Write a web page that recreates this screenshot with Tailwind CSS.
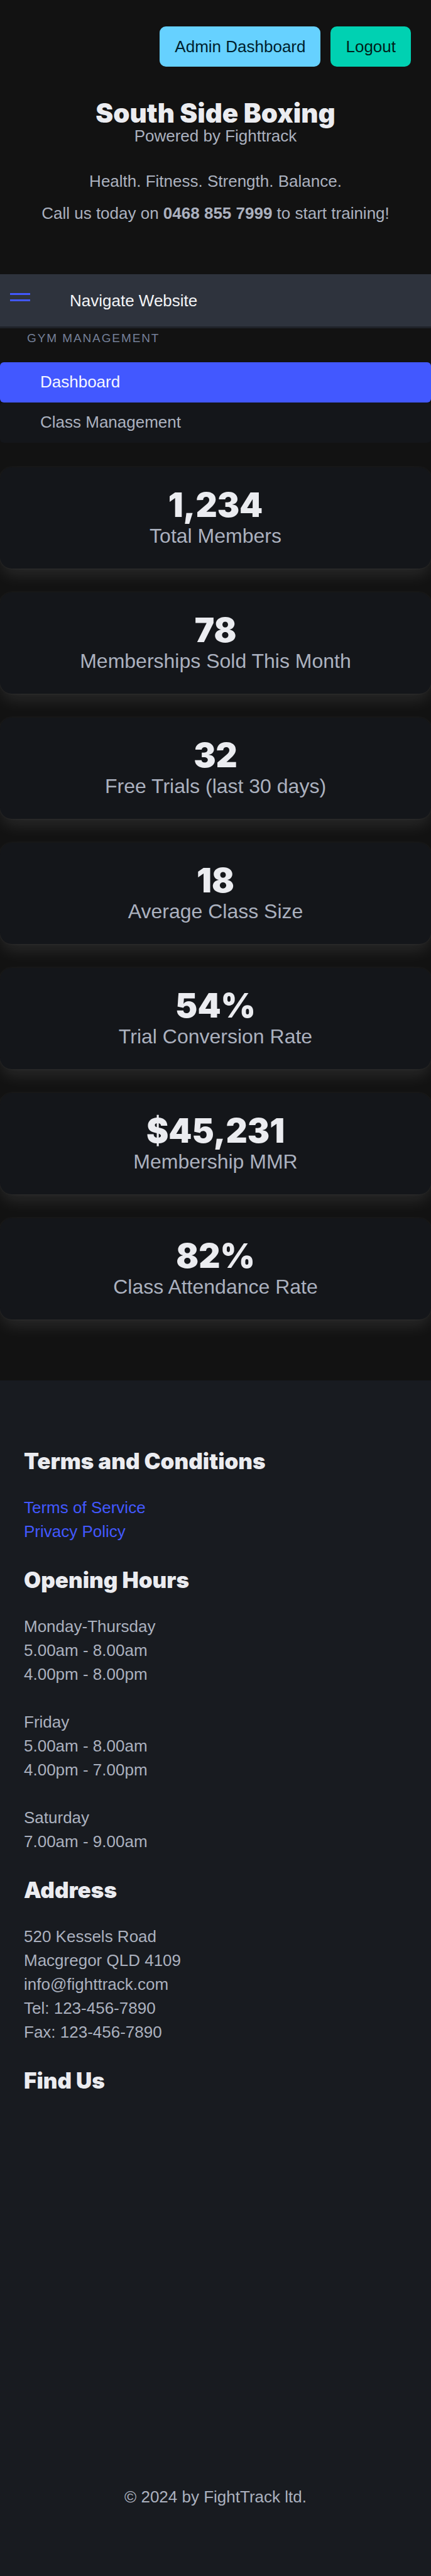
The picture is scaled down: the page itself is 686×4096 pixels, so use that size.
<!DOCTYPE html>
<html lang="en">
<head>
<meta charset="utf-8">
<meta name="viewport" content="width=device-width, initial-scale=1">
<title>South Side Boxing</title>
<script src="https://cdn.jsdelivr.net/npm/@tailwindcss/browser@4"></script>
</head>
<body class="min-h-screen bg-[#121212] font-['Liberation_Sans',Arial,sans-serif] text-[26px] leading-[38px] text-[#abb1bf]">
<header class="px-8 pt-[42px] pb-[78px] text-center">
  <div class="flex justify-end gap-4">
    <button type="button" class="h-16 rounded-[10px] bg-[#66d1ff] px-6 text-[#001f2e]">Admin Dashboard</button>
    <button type="button" class="h-16 rounded-[10px] bg-[#00d1b2] px-6 text-[#001f1a]">Logout</button>
  </div>
  <h1 class="mt-[53px] font-['Inter',sans-serif] text-[42px] leading-[42px] font-black text-[#ebecf0]">South Side Boxing</h1>
  <p class="leading-[30px]">Powered by Fighttrack</p>
  <p class="mt-[38px]">Health. Fitness. Strength. Balance.</p>
  <p class="mt-[13px]">Call us today on <strong>0468 855 7999</strong> to start training!</p>
</header>

<nav class="flex h-[86px] items-center border-b-[3px] border-[#1f2229] bg-[#2e333d] pl-4 text-[#f3f4f6]">
  <button type="button" aria-label="Open menu" class="mr-[63px]">
    <svg class="block h-[23px] w-8" viewBox="0 0 32 23" fill="#4258ff" aria-hidden="true"><rect width="32" height="3"/><rect y="10" width="32" height="3"/></svg>
  </button>
  <span>Navigate Website</span>
</nav>

<aside>
  <p class="mb-6 px-[43px] pt-px text-[19px] leading-[29px] tracking-widest uppercase text-[#758099]">Gym Management</p>
  <ul>
    <li><a href="#dashboard" aria-current="page" class="block rounded-md bg-[#4258ff] px-16 pt-3 pb-[14px] text-[#f5f6ff]">Dashboard</a></li>
    <li><a href="#classes" class="block rounded-md bg-[#14161a] px-16 pt-3 pb-[14px]">Class Management</a></li>
  </ul>
</aside>

<main class="flex flex-col gap-[38px] pt-[39px] pb-[97px] text-center text-[32px] leading-10">
  <section class="rounded-[19px] bg-[#14161a] p-8 shadow-[0_13px_26px_-3px_rgba(255,255,255,0.1),0_0_0_2px_rgba(255,255,255,0.02)]">
    <h2 class="font-['Inter',sans-serif] text-[53px] leading-[57px] font-black text-[#ebecf0]">1,234</h2>
    <p>Total Members</p>
  </section>
  <section class="rounded-[19px] bg-[#14161a] p-8 shadow-[0_13px_26px_-3px_rgba(255,255,255,0.1),0_0_0_2px_rgba(255,255,255,0.02)]">
    <h2 class="font-['Inter',sans-serif] text-[53px] leading-[57px] font-black text-[#ebecf0]">78</h2>
    <p>Memberships Sold This Month</p>
  </section>
  <section class="rounded-[19px] bg-[#14161a] p-8 shadow-[0_13px_26px_-3px_rgba(255,255,255,0.1),0_0_0_2px_rgba(255,255,255,0.02)]">
    <h2 class="font-['Inter',sans-serif] text-[53px] leading-[57px] font-black text-[#ebecf0]">32</h2>
    <p>Free Trials (last 30 days)</p>
  </section>
  <section class="rounded-[19px] bg-[#14161a] p-8 shadow-[0_13px_26px_-3px_rgba(255,255,255,0.1),0_0_0_2px_rgba(255,255,255,0.02)]">
    <h2 class="font-['Inter',sans-serif] text-[53px] leading-[57px] font-black text-[#ebecf0]">18</h2>
    <p>Average Class Size</p>
  </section>
  <section class="rounded-[19px] bg-[#14161a] p-8 shadow-[0_13px_26px_-3px_rgba(255,255,255,0.1),0_0_0_2px_rgba(255,255,255,0.02)]">
    <h2 class="font-['Inter',sans-serif] text-[53px] leading-[57px] font-black text-[#ebecf0]">54%</h2>
    <p>Trial Conversion Rate</p>
  </section>
  <section class="rounded-[19px] bg-[#14161a] p-8 shadow-[0_13px_26px_-3px_rgba(255,255,255,0.1),0_0_0_2px_rgba(255,255,255,0.02)]">
    <h2 class="font-['Inter',sans-serif] text-[53px] leading-[57px] font-black text-[#ebecf0]">$45,231</h2>
    <p>Membership MMR</p>
  </section>
  <section class="rounded-[19px] bg-[#14161a] p-8 shadow-[0_13px_26px_-3px_rgba(255,255,255,0.1),0_0_0_2px_rgba(255,255,255,0.02)]">
    <h2 class="font-['Inter',sans-serif] text-[53px] leading-[57px] font-black text-[#ebecf0]">82%</h2>
    <p>Class Attendance Rate</p>
  </section>
</main>

<footer class="bg-[#181b20] px-[38px] pt-[110px] pb-[107px]">
  <div class="flex flex-col gap-10">
    <section>
      <h3 class="mb-[37px] font-['Inter',sans-serif] text-[35px] leading-9 font-black text-[#ebecf0]">Terms and Conditions</h3>
      <p><a href="#terms" class="text-[#4258ff]">Terms of Service</a></p>
      <p><a href="#privacy" class="text-[#4258ff]">Privacy Policy</a></p>
    </section>
    <section>
      <h3 class="mb-[37px] font-['Inter',sans-serif] text-[35px] leading-9 font-black text-[#ebecf0]">Opening Hours</h3>
      <div class="flex flex-col gap-[38px]">
        <p>Monday-Thursday<br>5.00am - 8.00am<br>4.00pm - 8.00pm</p>
        <p>Friday<br>5.00am - 8.00am<br>4.00pm - 7.00pm</p>
        <p>Saturday<br>7.00am - 9.00am</p>
      </div>
    </section>
    <section>
      <h3 class="mb-[37px] font-['Inter',sans-serif] text-[35px] leading-9 font-black text-[#ebecf0]">Address</h3>
      <address class="not-italic">520 Kessels Road<br>Macgregor QLD 4109<br>info@fighttrack.com<br>Tel: 123-456-7890<br>Fax: 123-456-7890</address>
    </section>
    <section>
      <h3 class="mb-[37px] font-['Inter',sans-serif] text-[35px] leading-9 font-black text-[#ebecf0]">Find Us</h3>
      <div class="h-[548px]"></div>
    </section>
  </div>
  <p class="mt-10 text-center">© 2024 by FightTrack ltd.</p>
</footer>
</body>
</html>
